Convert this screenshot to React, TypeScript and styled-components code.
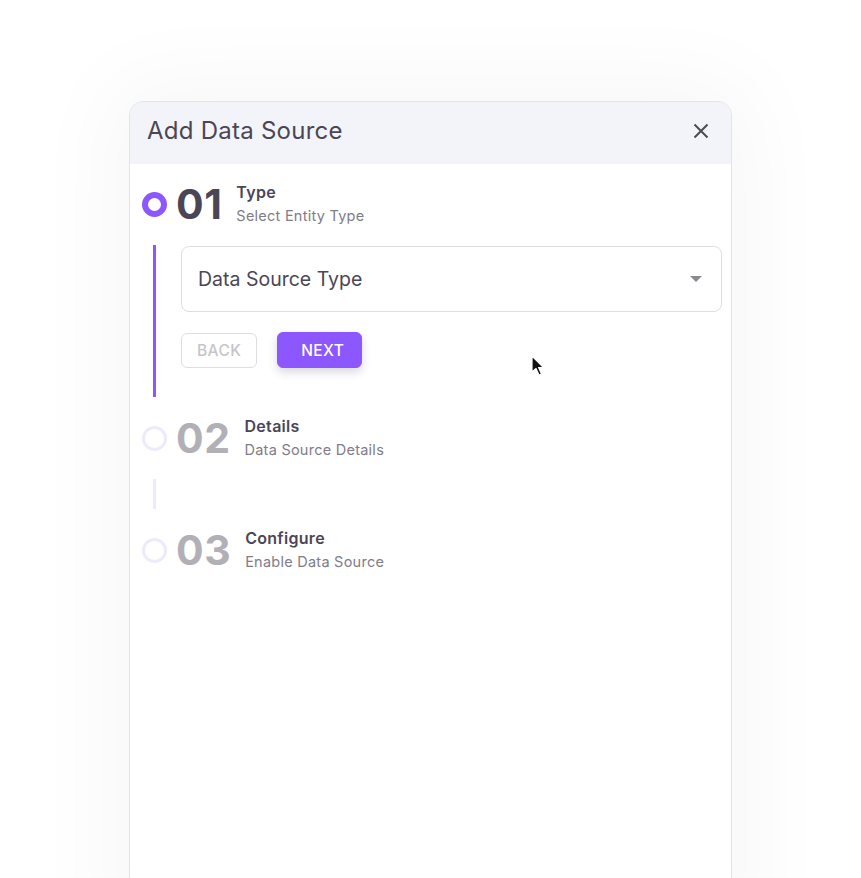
import React from "react";
import styled, { createGlobalStyle } from "styled-components";

const Global = createGlobalStyle`
  html, body { margin: 0; padding: 0; background: #ffffff; }
  body { font-family: Inter, "Noto Sans", "Liberation Sans", sans-serif; overflow: hidden; }
  * { box-sizing: border-box; }
`;

const Page = styled.div`
  width: 861px;
  height: 878px;
  padding: 101px 0 0 129px;
  overflow: hidden;
`;

const Dialog = styled.div`
  position: relative;
  width: 603px;
  height: 860px;
  border: 1px solid #e3e3ea;
  border-radius: 14px;
  background: #ffffff;
  box-shadow: 0 0 90px 20px rgba(30, 30, 60, 0.035);
  overflow: hidden;
`;

const Header = styled.div`
  height: 62px;
  background: #f3f4f9;
  display: flex;
  align-items: center;
  justify-content: space-between;
  padding: 0 22px 5px 17px;
`;

const Title = styled.h2`
  margin: 0;
  font-size: 24px;
  font-weight: 400;
  color: #4b4656;
  letter-spacing: 0.25px;
`;

const CloseButton = styled.button`
  width: 16px;
  height: 16px;
  border: none;
  background: transparent;
  padding: 0;
  display: flex;
  align-items: center;
  justify-content: center;
  color: #4b4a55;
`;

const Body = styled.div`
  padding: 16px 9px 0 12px;
  display: flex;
  flex-direction: column;
`;

const StepHeader = styled.div`
  height: 48px;
  display: flex;
  align-items: center;
`;

const Dot = styled.span<{ $active?: boolean }>`
  width: 25px;
  height: 25px;
  border-radius: 50%;
  border: ${(p) => (p.$active ? "6px solid #8c57ff" : "3px solid #eee9fd")};
  flex: none;
`;

const StepNumber = styled.span<{ $active?: boolean }>`
  margin-left: 9px;
  font-size: 41px;
  font-weight: 700;
  line-height: 1;
  color: ${(p) => (p.$active ? "#4b4656" : "#b2b0b7")};
  letter-spacing: 0.5px;
`;

const StepText = styled.div`
  margin-left: 14px;
  display: flex;
  flex-direction: column;
  margin-top: 1px;
`;

const StepTitle = styled.span`
  font-size: 16px;
  font-weight: 600;
  color: #4b4656;
  line-height: 22px;
  letter-spacing: 0.3px;
`;

const StepSub = styled.span`
  font-size: 14.5px;
  font-weight: 400;
  color: #807c88;
  line-height: 26px;
  letter-spacing: 0.25px;
`;

const Connector = styled.div<{ $active?: boolean }>`
  margin: 17px 0 17px 11px;
  border-left: 3px solid ${(p) => (p.$active ? "#8c57ff" : "#eee9fd")};
  min-height: 28px;
  padding: 1px 0 29px 25px;
  display: flex;
  flex-direction: column;
  gap: 20px;
`;

const Select = styled.div`
  height: 66px;
  border: 1px solid #dedde3;
  border-radius: 8px;
  display: flex;
  align-items: center;
  justify-content: space-between;
  padding: 0 19px 0 16px;
  font-size: 19.5px;
  color: #4b4656;
`;

const Caret = styled.span`
  width: 0;
  height: 0;
  border-left: 6px solid transparent;
  border-right: 6px solid transparent;
  border-top: 6px solid #8a8990;
`;

const Buttons = styled.div`
  display: flex;
  align-items: center;
  gap: 20px;
`;

const Button = styled.button<{ $primary?: boolean }>`
  font-family: inherit;
  height: ${(p) => (p.$primary ? "36px" : "35px")};
  padding: ${(p) => (p.$primary ? "0 17px 0 23px" : "0 15px")};
  border-radius: 6px;
  font-size: 15.5px;
  font-weight: 500;
  letter-spacing: 0.4px;
  text-transform: uppercase;
  border: 1px solid ${(p) => (p.$primary ? "#8c57ff" : "#dedde3")};
  background: ${(p) => (p.$primary ? "#8c57ff" : "#ffffff")};
  color: ${(p) => (p.$primary ? "#ffffff" : "#c6c5ca")};
  box-shadow: ${(p) => (p.$primary ? "0 4px 10px rgba(40, 30, 70, 0.18)" : "none")};
`;

const Cursor = styled.svg`
  position: absolute;
  left: 401px;
  top: 253px;
`;

type Step = { num: string; title: string; sub: string };

const steps: Step[] = [
  { num: "01", title: "Type", sub: "Select Entity Type" },
  { num: "02", title: "Details", sub: "Data Source Details" },
  { num: "03", title: "Configure", sub: "Enable Data Source" },
];

export default function App() {
  return (
    <>
      <Global />
      <Page>
        <Dialog>
          <Header>
            <Title>Add Data Source</Title>
            <CloseButton aria-label="close">
              <svg width="16" height="16" viewBox="0 0 16 16">
                <path d="M1.5 1.5L14.5 14.5M14.5 1.5L1.5 14.5" stroke="currentColor" strokeWidth="2" />
              </svg>
            </CloseButton>
          </Header>
          <Body>
            {steps.map((s, i) => (
              <React.Fragment key={s.num}>
                <StepHeader>
                  <Dot $active={i === 0} />
                  <StepNumber $active={i === 0}>{s.num}</StepNumber>
                  <StepText>
                    <StepTitle>{s.title}</StepTitle>
                    <StepSub>{s.sub}</StepSub>
                  </StepText>
                </StepHeader>
                {i === 0 && (
                  <Connector $active>
                    <Select>
                      <span>Data Source Type</span>
                      <Caret />
                    </Select>
                    <Buttons>
                      <Button>Back</Button>
                      <Button $primary>Next</Button>
                    </Buttons>
                  </Connector>
                )}
                {i === 1 && <Connector />}
              </React.Fragment>
            ))}
          </Body>
          <Cursor width="14" height="22" viewBox="0 0 14 22">
            <path d="M1 1 L1 17 L5 13.5 L8 20 L10.5 19 L7.6 12.6 L12.5 12.6 Z" fill="#111" stroke="#fff" strokeWidth="1.2" strokeLinejoin="round" />
          </Cursor>
        </Dialog>
      </Page>
    </>
  );
}
